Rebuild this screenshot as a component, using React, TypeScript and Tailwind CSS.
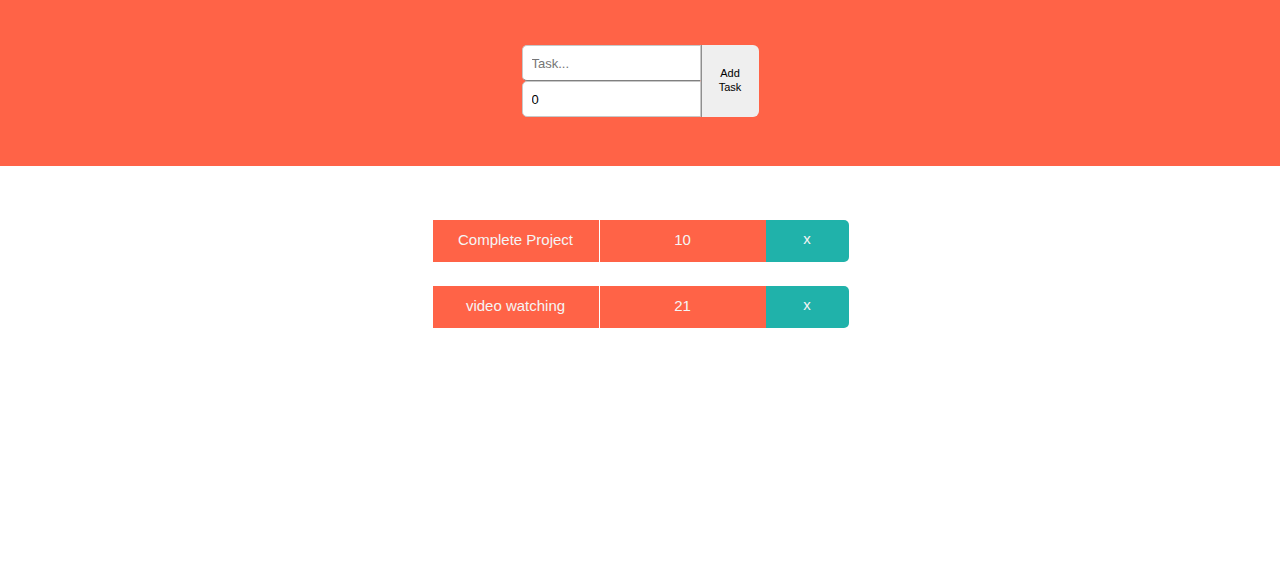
import { useState } from "react";

interface Task {
  id: number;
  name: string;
  time: number;
}

const App = () => {
  const [tasks, setTasks] = useState<Task[]>([
    { id: 1, name: "Complete Project", time: 10 },
    { id: 2, name: "video watching", time: 21 },
  ]);
  const [name, setName] = useState("");
  const [time, setTime] = useState(0);

  const addTask = () => {
    if (!name.trim()) return;
    setTasks((prev) => [...prev, { id: Date.now(), name, time }]);
    setName("");
    setTime(0);
  };

  const removeTask = (id: number) => {
    setTasks((prev) => prev.filter((t) => t.id !== id));
  };

  return (
    <div className="min-h-screen bg-white font-['Liberation_Sans',Arial,sans-serif]">
      {/* header */}
      <div className="h-[166px] bg-[#ff6347] flex justify-center pt-[45px]">
        <div className="flex h-[72px]">
          <div className="flex flex-col w-[179px]">
            <input
              type="text"
              placeholder="Task..."
              value={name}
              onChange={(e) => setName(e.target.value)}
              className="h-[36px] bg-white rounded-l-[5px] border border-[#c8c8c8] border-b-[#808080] pl-[9px] pr-[8px] text-[13px] text-black placeholder:text-[#757575] outline-none"
            />
            <input
              type="text"
              inputMode="numeric"
              value={time}
              onChange={(e) => setTime(Number(e.target.value) || 0)}
              className="h-[36px] bg-white rounded-l-[5px] border border-[#c8c8c8] pl-[9px] pr-[8px] text-[13px] text-black outline-none"
            />
          </div>
          <button
            onClick={addTask}
            className="w-[58px] h-[72px] bg-[#efefef] rounded-r-[6px] border-l border-[#8f8f8f] text-[11px] leading-[14px] text-black pb-[2px]"
          >
            Add
            <br />
            Task
          </button>
        </div>
      </div>

      {/* list */}
      <div className="flex flex-col items-center pt-[54px] gap-[24px]">
        {tasks.map((t) => (
          <div key={t.id} className="flex h-[42px] w-[417px] pl-px text-[15px] leading-[18px] text-[#f5f5f5]">
            <div className="w-[167px] bg-[#ff6347] flex items-center justify-center border-r border-white pb-[2px]">
              {t.name}
            </div>
            <div className="w-[166px] bg-[#ff6347] flex items-center justify-center pb-[2px]">
              {t.time}
            </div>
            <button
              onClick={() => removeTask(t.id)}
              className="w-[83px] bg-[#20b2aa] rounded-r-[5px] flex items-center justify-center text-[15px] leading-[18px] text-[#f5f5f5] pb-[5px]"
            >
              x
            </button>
          </div>
        ))}
      </div>
    </div>
  );
};

export default App;
